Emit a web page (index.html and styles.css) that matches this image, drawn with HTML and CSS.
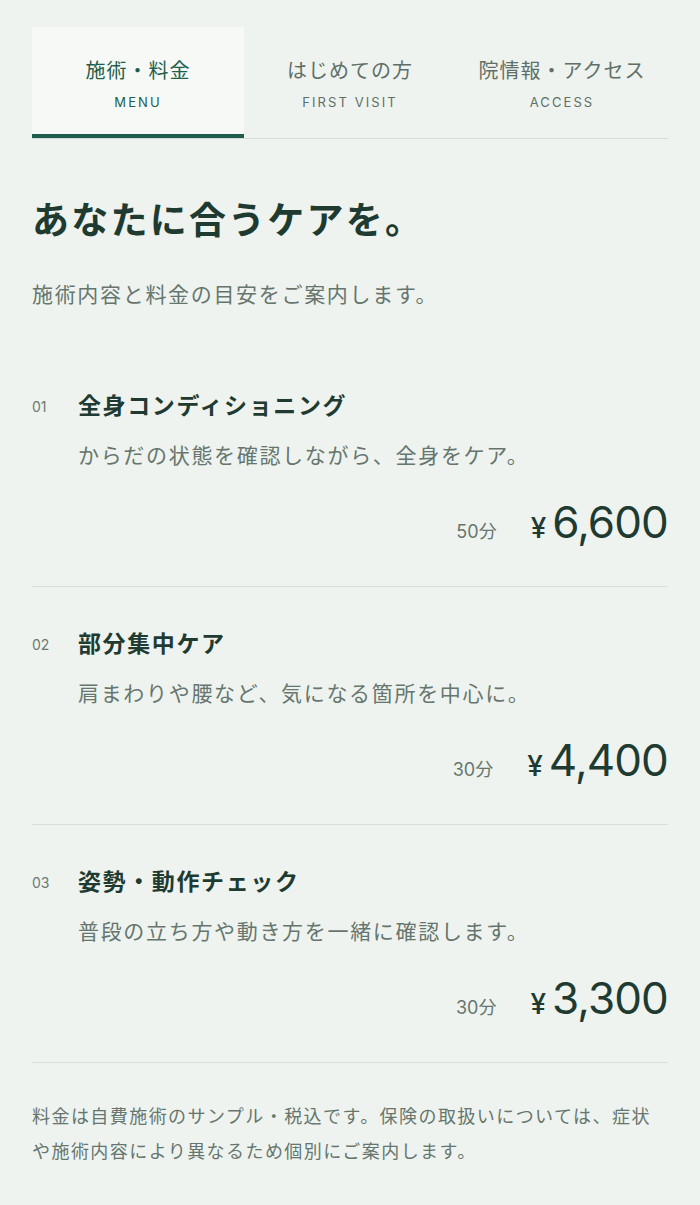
FILE: index.html
```html
<!DOCTYPE html>
<html lang="ja">
<head>
    <meta charset="UTF-8">
    <meta name="viewport" content="width=device-width, initial-scale=1.0">
    <title>施術・料金</title>
    <link rel="stylesheet" href="styles.css">
</head>
<body>
    <div class="page">
        <nav class="tabs">
            <a href="#" class="tab active">
                <span class="tab-ja">施術・料金</span>
                <span class="tab-en">MENU</span>
            </a>
            <a href="#" class="tab">
                <span class="tab-ja">はじめての方</span>
                <span class="tab-en">FIRST VISIT</span>
            </a>
            <a href="#" class="tab">
                <span class="tab-ja">院情報・アクセス</span>
                <span class="tab-en">ACCESS</span>
            </a>
        </nav>

        <h1 class="heading">あなたに合うケアを。</h1>
        <p class="lead">施術内容と料金の目安をご案内します。</p>

        <ul class="menu">
            <li class="item">
                <div class="item-head">
                    <span class="num">01</span>
                    <h2 class="item-title">全身コンディショニング</h2>
                </div>
                <p class="item-desc">からだの状態を確認しながら、全身をケア。</p>
                <div class="price-row">
                    <span class="time">50分</span>
                    <span class="yen">¥</span>
                    <span class="price">6,600</span>
                </div>
            </li>
            <li class="item">
                <div class="item-head">
                    <span class="num">02</span>
                    <h2 class="item-title">部分集中ケア</h2>
                </div>
                <p class="item-desc">肩まわりや腰など、気になる箇所を中心に。</p>
                <div class="price-row">
                    <span class="time">30分</span>
                    <span class="yen">¥</span>
                    <span class="price">4,400</span>
                </div>
            </li>
            <li class="item">
                <div class="item-head">
                    <span class="num">03</span>
                    <h2 class="item-title">姿勢・動作チェック</h2>
                </div>
                <p class="item-desc">普段の立ち方や動き方を一緒に確認します。</p>
                <div class="price-row">
                    <span class="time">30分</span>
                    <span class="yen">¥</span>
                    <span class="price">3,300</span>
                </div>
            </li>
        </ul>

        <p class="note">料金は自費施術のサンプル・税込です。保険の取扱いについては、症状や施術内容により異なるため個別にご案内します。</p>
    </div>
</body>
</html>
```

FILE: styles.css
```css
html,body{
    margin: 0;
    padding: 0;
    background: #eef3ef;
    color: #1f3b31;
    font-family: "Noto Sans CJK JP", "Noto Sans", sans-serif;
}
.page{
    padding: 27px 32px 40px;
}

/* tabs */
.tabs{
    display: grid;
    grid-template-columns: repeat(3, 1fr);
    border-bottom: 1px solid #d5ddd8;
}
.tab{
    display: flex;
    flex-direction: column;
    align-items: center;
    padding: 28px 0 22px;
    border-bottom: 4px solid transparent;
    text-decoration: none;
    color: #5f6f67;
}
.tab.active{
    background: #f6f9f6;
    border-bottom-color: #1e5e4b;
    color: #1e5e4b;
}
.tab-ja{
    font-size: 20px;
    line-height: 30px;
    letter-spacing: 0.05em;
}
.tab-en{
    margin-top: 7px;
    font-family: Inter, "Noto Sans", sans-serif;
    font-size: 13px;
    line-height: 20px;
    letter-spacing: 0.16em;
}

/* intro */
.heading{
    margin: 54px 0 0;
    font-size: 37px;
    line-height: 50px;
    font-weight: bold;
    letter-spacing: 0.06em;
}
.lead{
    margin: 34px 0 0;
    font-size: 21px;
    line-height: 32px;
    letter-spacing: 0.08em;
    color: #66766e;
}

/* menu list */
.menu{
    list-style: none;
    margin: 40px 0 0;
    padding: 0;
}
.item{
    padding: 38px 0 36px;
    border-bottom: 1px solid #d8dfdb;
}
.item-head{
    display: flex;
    align-items: center;
}
.num{
    width: 46px;
    flex-shrink: 0;
    font-family: Inter, "Noto Sans", sans-serif;
    font-size: 14px;
    color: #6a7a72;
    padding-top: 4px;
}
.item-title{
    margin: 0;
    font-size: 23px;
    line-height: 34px;
    font-weight: bold;
    letter-spacing: 0.07em;
}
.item-desc{
    margin: 17px 0 0 46px;
    font-size: 21px;
    line-height: 32px;
    letter-spacing: 0.08em;
    color: #66766e;
}
.price-row{
    margin-top: 24px;
    display: flex;
    justify-content: flex-end;
    align-items: baseline;
    height: 56px;
}
.time{
    margin-right: 34px;
    font-family: Inter, "Noto Sans CJK JP", sans-serif;
    font-size: 18px;
    color: #66766e;
}
.yen{
    margin-right: 6px;
    font-family: Inter, "Noto Sans", sans-serif;
    font-size: 28px;
    font-weight: 500;
}
.price{
    font-family: Inter, "Noto Sans", sans-serif;
    font-size: 44px;
    line-height: 56px;
    letter-spacing: -0.02em;
}

.note{
    margin: 35px 0 0;
    font-size: 18px;
    line-height: 35px;
    letter-spacing: 0.08em;
    color: #66766e;
}
```
